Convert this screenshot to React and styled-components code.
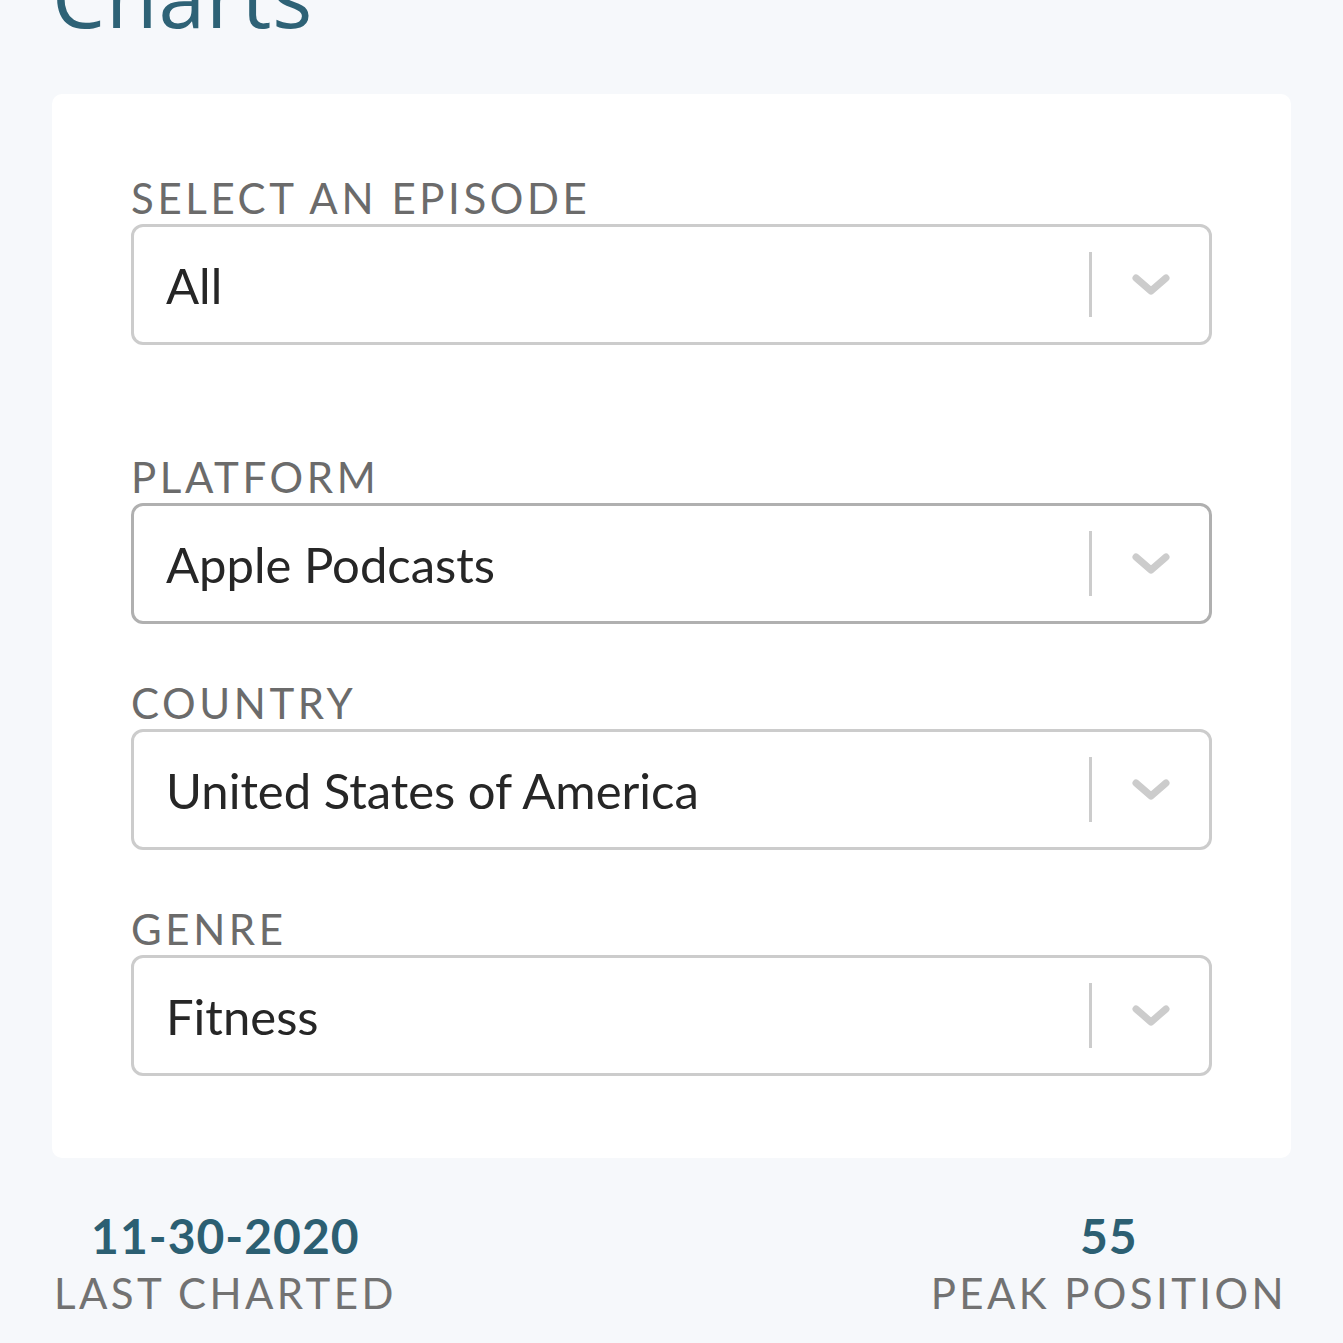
import React from 'react';
import styled, { createGlobalStyle } from 'styled-components';

const GlobalStyle = createGlobalStyle`
  html, body {
    margin: 0;
    padding: 0;
    background-color: #f6f8fb;
  }
  body {
    font-family: Lato, 'Noto Sans', sans-serif;
    overflow: hidden;
  }
`;

const Page = styled.main`
  display: flex;
  flex-direction: column;
  padding: 0 52px;
  width: 1343px;
  height: 1343px;
  box-sizing: border-box;
  overflow: hidden;
`;

const Title = styled.h1`
  margin: -54px 0 0 0;
  font-family: 'Open Sans', sans-serif;
  font-weight: 400;
  font-size: 84px;
  line-height: 100px;
  color: #2e6276;
  letter-spacing: 1px;
`;

const Card = styled.section`
  display: flex;
  flex-direction: column;
  margin-top: 48px;
  padding: 78px 79px 82px;
  background-color: #fff;
  border-radius: 10px;
`;

const Field = styled.div`
  display: flex;
  flex-direction: column;
  margin-bottom: ${(p) => p.$gap}px;

  &:last-child {
    margin-bottom: 0;
  }
`;

const Label = styled.label`
  font-size: 42px;
  line-height: 52px;
  letter-spacing: 3.6px;
  color: #6b6b6b;
  text-transform: uppercase;
`;

const SelectBox = styled.div`
  display: flex;
  align-items: center;
  height: 121px;
  box-sizing: border-box;
  border: 3px solid ${(p) => (p.$focused ? '#b0b0b0' : '#cccccc')};
  border-radius: 12px;
  background-color: #fff;
`;

const Value = styled.span`
  flex: 1;
  padding-left: 32px;
  font-size: 49px;
  color: #262626;
`;

const Separator = styled.span`
  width: 3px;
  height: 65px;
  background-color: #cccccc;
`;

const Indicator = styled.span`
  display: flex;
  align-items: center;
  justify-content: center;
  width: 117px;
`;

const Stats = styled.div`
  display: flex;
  justify-content: space-between;
  margin-top: 49px;
  padding: 0 4px 0 2px;
`;

const Stat = styled.div`
  display: flex;
  flex-direction: column;
  align-items: center;
`;

const StatValue = styled.span`
  font-size: 48px;
  line-height: 58px;
  font-weight: 700;
  letter-spacing: 1px;
  color: #2c5f72;
`;

const StatLabel = styled.span`
  font-size: 42px;
  line-height: 56px;
  letter-spacing: 3.4px;
  color: #727272;
`;

function Chevron() {
  return (
    <svg width="40" height="24" viewBox="0 0 40 24">
      <path
        d="M5 5 L20 18 L35 5"
        fill="none"
        stroke="#cccccc"
        strokeWidth="7"
        strokeLinecap="round"
        strokeLinejoin="round"
      />
    </svg>
  );
}

const fields = [
  { label: 'Select an episode', value: 'All', gap: 106 },
  { label: 'Platform', value: 'Apple Podcasts', gap: 53, focused: true },
  { label: 'Country', value: 'United States of America', gap: 53 },
  { label: 'Genre', value: 'Fitness', gap: 53 },
];

export default function App() {
  return (
    <>
      <GlobalStyle />
      <Page>
        <Title>Charts</Title>
        <Card>
          {fields.map((f) => (
            <Field key={f.label} $gap={f.gap}>
              <Label>{f.label}</Label>
              <SelectBox $focused={f.focused}>
                <Value>{f.value}</Value>
                <Separator />
                <Indicator>
                  <Chevron />
                </Indicator>
              </SelectBox>
            </Field>
          ))}
        </Card>
        <Stats>
          <Stat>
            <StatValue>11-30-2020</StatValue>
            <StatLabel>LAST CHARTED</StatLabel>
          </Stat>
          <Stat>
            <StatValue>55</StatValue>
            <StatLabel>PEAK POSITION</StatLabel>
          </Stat>
        </Stats>
      </Page>
    </>
  );
}
